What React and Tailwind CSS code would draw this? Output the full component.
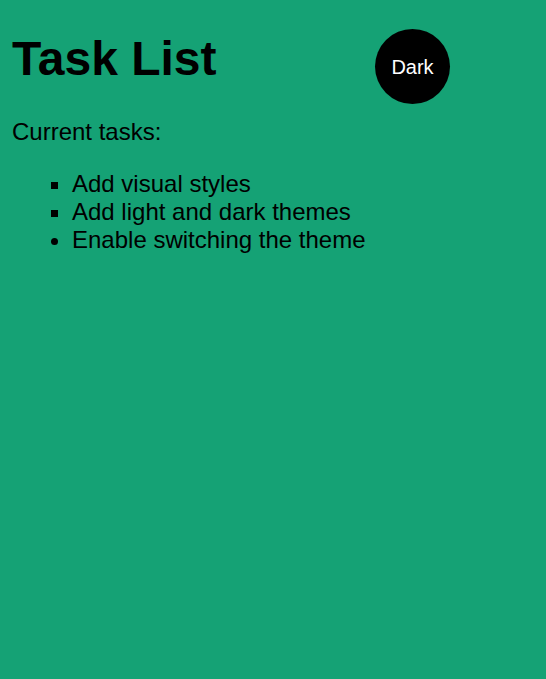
import React from 'react'

const tasks = [
  { text: 'Add visual styles', marker: 'list-[square]' },
  { text: 'Add light and dark themes', marker: 'list-[square]' },
  { text: 'Enable switching the theme', marker: 'list-disc' },
]

export default function App() {
  return (
    <div className="min-h-[679px] bg-[#15a275] text-black px-3 text-[24px] font-['Liberation_Sans',Arial,sans-serif]">
      <div className="flex items-start pt-[27px]">
        <h1 className="mt-[4px] text-[48px] font-bold leading-[55px] w-[363px]">Task List</h1>
        <button className="mt-[2px] w-[75px] h-[75px] rounded-full bg-black text-white text-[20px] leading-none">
          Dark
        </button>
      </div>
      <p className="mt-[14px] leading-[28px]">Current tasks:</p>
      <ul className="mt-6 pl-[60px]">
        {tasks.map((t) => (
          <li key={t.text} className={`${t.marker} leading-[28px]`}>
            {t.text}
          </li>
        ))}
      </ul>
    </div>
  )
}
